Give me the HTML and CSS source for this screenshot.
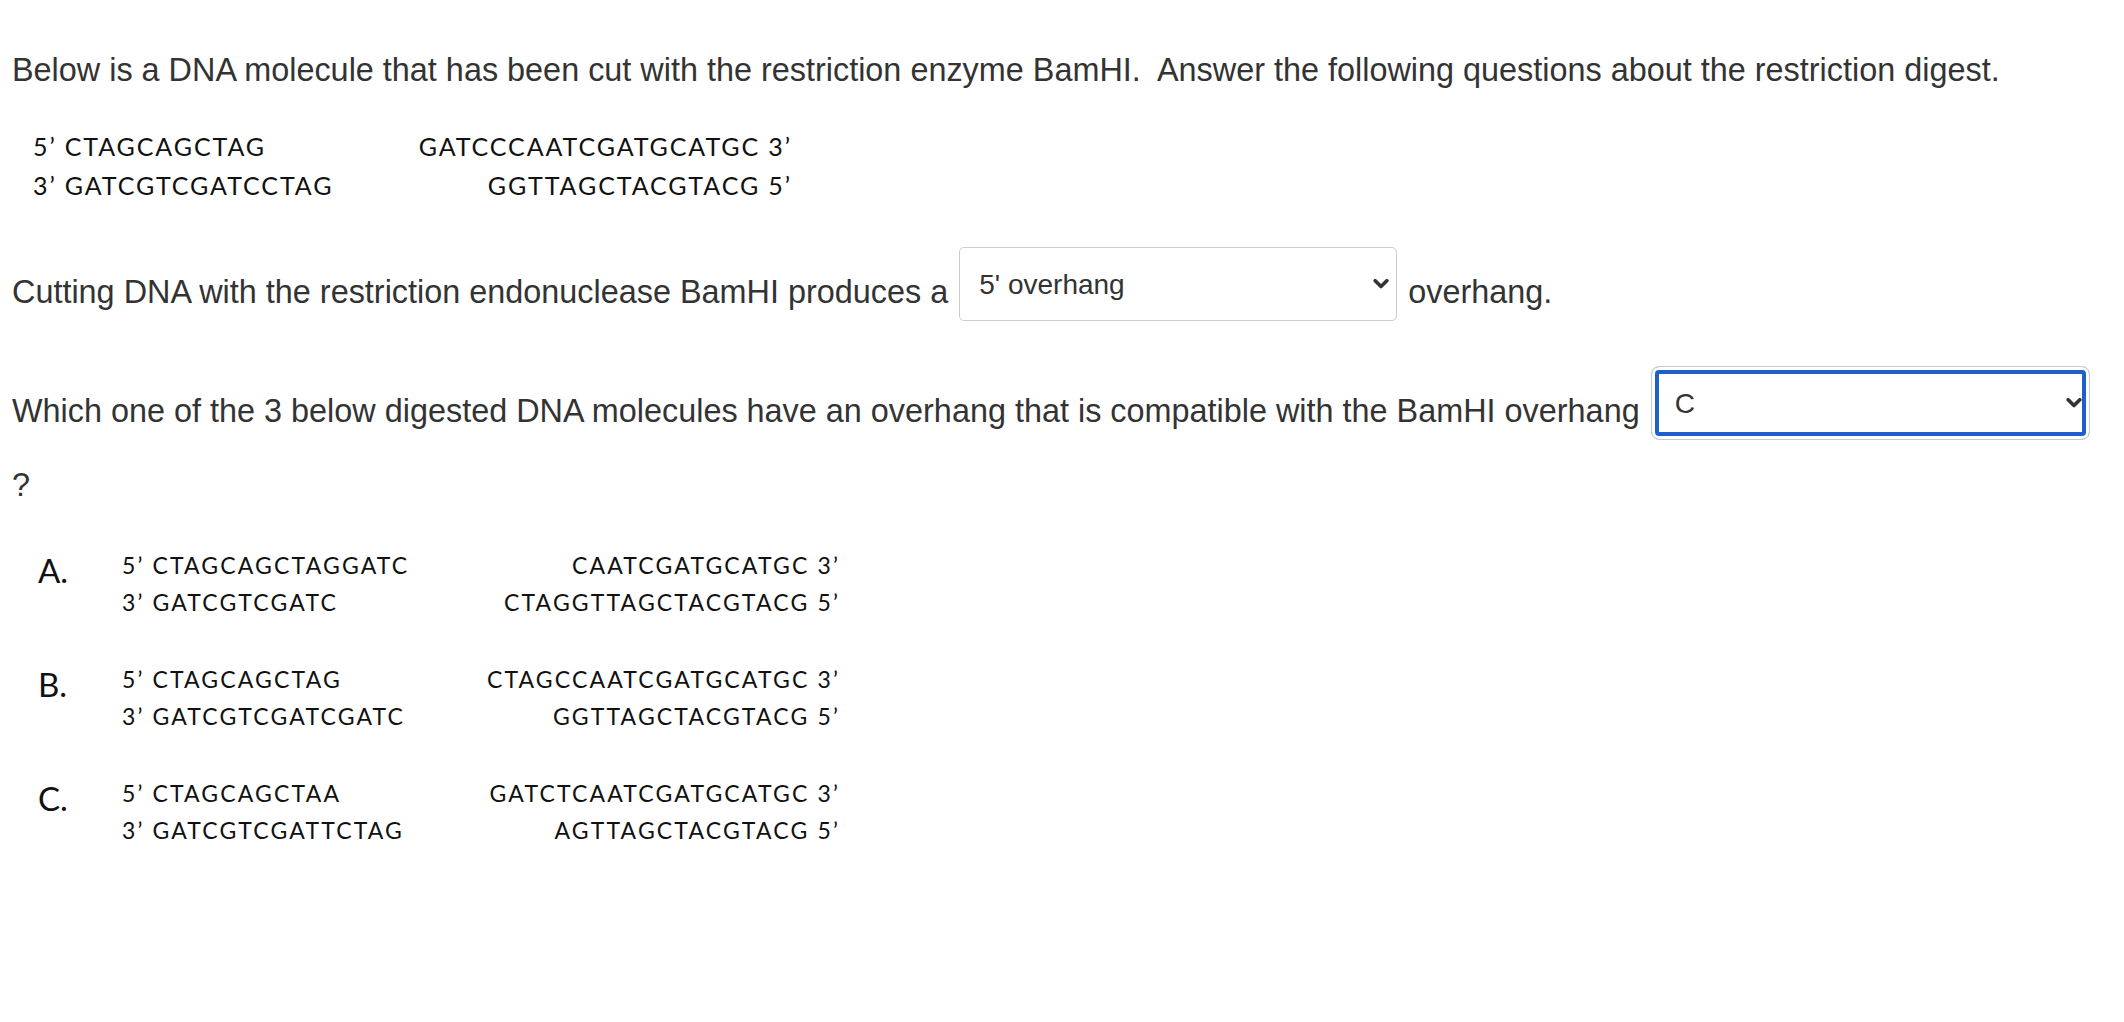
FILE: index.html
```html
<!DOCTYPE html>
<html lang="en">
<head>
<meta charset="utf-8">
<title>BamHI restriction digest</title>
<link rel="stylesheet" href="styles.css">
</head>
<body>
<div class="page">
  <p class="intro">Below is a DNA molecule that has been cut with the restriction enzyme BamHI.&nbsp; Answer the following questions about the restriction digest.</p>

  <div class="dna dna-main">
    <span class="l">5’ CTAGCAGCTAG</span><span class="r">GATCCCAATCGATGCATGC 3’</span>
    <span class="l">3’ GATCGTCGATCCTAG</span><span class="r">GGTTAGCTACGTACG 5’</span>
  </div>

  <div class="q q1">
    <span class="t">Cutting DNA with the restriction endonuclease BamHI produces a</span>
    <span class="sel">
      <select class="s1"><option>5' overhang</option><option>3' overhang</option><option>blunt</option></select>
      <svg class="chev" width="16" height="11" viewBox="0 0 16 11"><path d="M2.2 2.2 L8 8 L13.8 2.2" fill="none" stroke="#333" stroke-width="3.6" stroke-linecap="round" stroke-linejoin="round"/></svg>
    </span>
    <span class="t">overhang.</span>
  </div>

  <div class="q q2">
    <span class="t">Which one of the 3 below digested DNA molecules have an overhang that is compatible with the BamHI overhang</span>
    <span class="sel">
      <select class="s2 focus"><option>C</option><option>A</option><option>B</option></select>
      <svg class="chev" width="16" height="11" viewBox="0 0 16 11"><path d="M2.2 2.2 L8 8 L13.8 2.2" fill="none" stroke="#333" stroke-width="3.6" stroke-linecap="round" stroke-linejoin="round"/></svg>
    </span>
  </div>
  <p class="qmark">?</p>

  <div class="options">
    <div class="opt">
      <span class="letter">A.</span>
      <span class="l">5’ CTAGCAGCTAGGATC</span><span class="r">CAATCGATGCATGC 3’</span>
      <span class="l">3’ GATCGTCGATC</span><span class="r">CTAGGTTAGCTACGTACG 5’</span>
    </div>
    <div class="opt">
      <span class="letter">B.</span>
      <span class="l">5’ CTAGCAGCTAG</span><span class="r">CTAGCCAATCGATGCATGC 3’</span>
      <span class="l">3’ GATCGTCGATCGATC</span><span class="r">GGTTAGCTACGTACG 5’</span>
    </div>
    <div class="opt">
      <span class="letter">C.</span>
      <span class="l">5’ CTAGCAGCTAA</span><span class="r">GATCTCAATCGATGCATGC 3’</span>
      <span class="l">3’ GATCGTCGATTCTAG</span><span class="r">AGTTAGCTACGTACG 5’</span>
    </div>
  </div>
</div>
</body>
</html>
```

FILE: styles.css
```css
html, body {
  margin: 0;
  padding: 0;
  background: #fff;
}

body {
  font-family: "Liberation Sans", Arial, Helvetica, sans-serif;
  font-size: 32.4px;
  color: #333;
}

.page {
  padding: 48px 12px 0 12px;
}

.intro {
  margin: 0;
  line-height: 44px;
}

.dna {
  font-family: Lato, "Open Sans", sans-serif;
  color: #111;
}

.dna-main {
  margin: 35px 0 0 21px;
  width: 759px;
  display: grid;
  grid-template-columns: 1fr auto;
  font-size: 25px;
  letter-spacing: 1.9px;
  line-height: 38.5px;
}

.dna-main .r,
.opt .r {
  text-align: right;
}

.q {
  display: flex;
  align-items: flex-start;
  gap: 11px;
  line-height: 44px;
}

.q1 { margin-top: 43px; }
.q2 { margin-top: 45px; }

.q .t {
  margin-top: 23px;
  white-space: nowrap;
}

.sel {
  position: relative;
  display: block;
  flex: none;
}

.sel select {
  appearance: none;
  -webkit-appearance: none;
  display: block;
  box-sizing: border-box;
  width: 438px;
  height: 74px;
  margin: 0;
  border: 1px solid #cccccc;
  border-radius: 5px;
  background: #fff;
  font-family: "Liberation Sans", Arial, Helvetica, sans-serif;
  font-size: 28px;
  color: #333;
  padding: 0 40px 0 19px;
}

.sel select.s2 {
  width: 439px;
  padding-left: 23px;
}

.sel select.focus {
  outline: none;
  border-color: #c9c9c9;
  border-radius: 8px;
  box-shadow: inset 0 0 0 3px #fff, inset 0 0 0 7px #1e5fc9;
}

.chev {
  position: absolute;
  right: 8px;
  top: 50%;
  transform: translateY(-50%);
  pointer-events: none;
}

.qmark {
  margin: 23px 0 0 0;
  line-height: 44px;
}

.options {
  margin: 40px 0 0 26px;
  display: flex;
  flex-direction: column;
  gap: 40px;
}

.opt {
  display: grid;
  grid-template-columns: 84px 1fr auto;
  grid-auto-rows: 37px;
  width: 802px;
  font-family: Lato, "Open Sans", sans-serif;
  font-size: 23px;
  letter-spacing: 2.15px;
  line-height: 37px;
  color: #111;
}

.opt .letter {
  grid-column: 1;
  grid-row: 1 / span 2;
  font-size: 33px;
  letter-spacing: 0;
  line-height: 37px;
  padding-top: 5px;
}

.opt .l { grid-column: 2; }
.opt .r { grid-column: 3; }
```
